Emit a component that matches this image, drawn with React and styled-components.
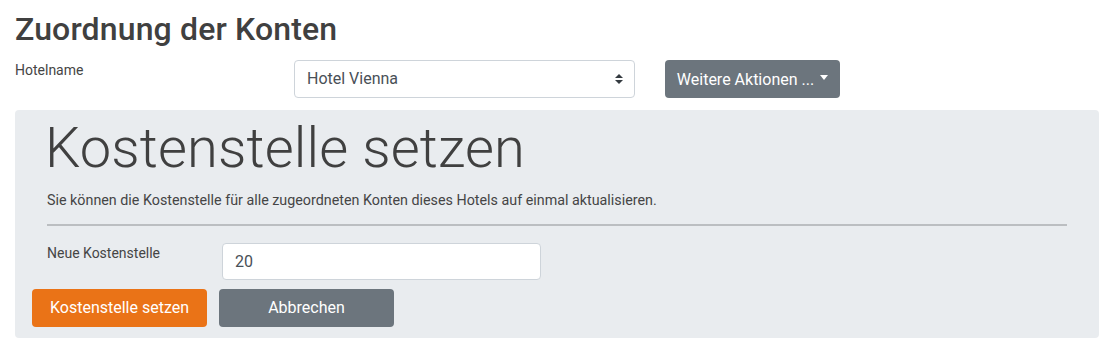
import React from "react";
import styled, { createGlobalStyle } from "styled-components";

const Global = createGlobalStyle`
  * { box-sizing: border-box; }
  body {
    margin: 0;
    background: #fff;
    font-family: Roboto, "Liberation Sans", sans-serif;
    color: #454545;
    font-size: 14px;
    line-height: 1.5;
  }
`;

const Page = styled.div`
  padding: 10px 12px 0 15px;
`;

const PageTitle = styled.h2`
  margin: 0 0 12px;
  font-size: 32px;
  font-weight: 500;
  line-height: 1.2;
  letter-spacing: 0.15px;
  color: #404040;
`;

const TopRow = styled.div`
  display: flex;
  align-items: flex-start;
  margin-bottom: 12px;
`;

const Label = styled.label`
  display: block;
  width: ${(p) => p.$width}px;
  flex: none;
  font-size: 14px;
  line-height: 21px;
  color: #454545;
`;

const SelectBox = styled.div`
  width: 341px;
  height: 38px;
  border: 1px solid #ced4da;
  border-radius: 4px;
  background: #fff;
  display: flex;
  align-items: center;
  justify-content: space-between;
  padding: 0 11px 0 12px;
  font-size: 16px;
  color: #495057;
`;

const Button = styled.button`
  width: 175px;
  height: 38px;
  border: none;
  border-radius: 4px;
  background: ${(p) => p.$bg};
  color: #fff;
  font-family: Roboto, "Liberation Sans", sans-serif;
  font-size: 16px;
  display: inline-flex;
  align-items: center;
  justify-content: center;
  padding: 0;
  cursor: pointer;
`;

const Caret = styled.span`
  display: inline-block;
  margin-left: 6px;
  margin-top: -3px;
  border-top: 5px solid #fff;
  border-left: 4.5px solid transparent;
  border-right: 4.5px solid transparent;
`;

const DropdownWrap = styled.div`
  margin-left: 30px;
`;

const Panel = styled.section`
  width: 1084px;
  background: #e9ecef;
  border-radius: 4px;
  padding: 5px 17px 11px;
`;

const PanelBody = styled.div`
  padding: 0 15px;
`;

const Display = styled.h1`
  margin: 0;
  font-size: 56px;
  font-weight: 300;
  line-height: 1.2;
  letter-spacing: 0.15px;
  color: #404040;
  margin-left: -2px;
`;

const Lead = styled.p`
  margin: 7px 0 0;
  font-size: 14.3px;
  line-height: 21px;
`;

const Rule = styled.hr`
  margin: 13px 0 17px;
  border: none;
  border-top: 2px solid #bbbec1;
`;

const FormRow = styled.div`
  display: flex;
  align-items: flex-start;
  margin-bottom: 9px;
`;

const Input = styled.input`
  width: 319px;
  height: 37px;
  border: 1px solid #ced4da;
  border-radius: 4px;
  padding: 0 12px;
  font-family: Roboto, "Liberation Sans", sans-serif;
  font-size: 16px;
  color: #495057;
  background: #fff;
  outline: none;
`;

const Actions = styled.div`
  display: flex;
  gap: 12px;
`;

const SortIcon = () => (
  <svg width="8" height="10" viewBox="0 0 4 5" aria-hidden="true">
    <path d="M2 0L0 2h4zm0 5L0 3h4z" fill="#343a40" />
  </svg>
);

export default function App() {
  return (
    <>
      <Global />
      <Page>
        <PageTitle>Zuordnung der Konten</PageTitle>
        <TopRow>
          <Label $width={279}>Hotelname</Label>
          <SelectBox>
            <span>Hotel Vienna</span>
            <SortIcon />
          </SelectBox>
          <DropdownWrap>
            <Button $bg="#6c757d">
              Weitere Aktionen ...
              <Caret />
            </Button>
          </DropdownWrap>
        </TopRow>
        <Panel>
          <PanelBody>
            <Display>Kostenstelle setzen</Display>
            <Lead>
              Sie können die Kostenstelle für alle zugeordneten Konten dieses
              Hotels auf einmal aktualisieren.
            </Lead>
            <Rule />
            <FormRow>
              <Label $width={175}>Neue Kostenstelle</Label>
              <Input defaultValue="20" />
            </FormRow>
          </PanelBody>
          <Actions>
            <Button $bg="#ea7317">Kostenstelle setzen</Button>
            <Button $bg="#6c757d">Abbrechen</Button>
          </Actions>
        </Panel>
      </Page>
    </>
  );
}
